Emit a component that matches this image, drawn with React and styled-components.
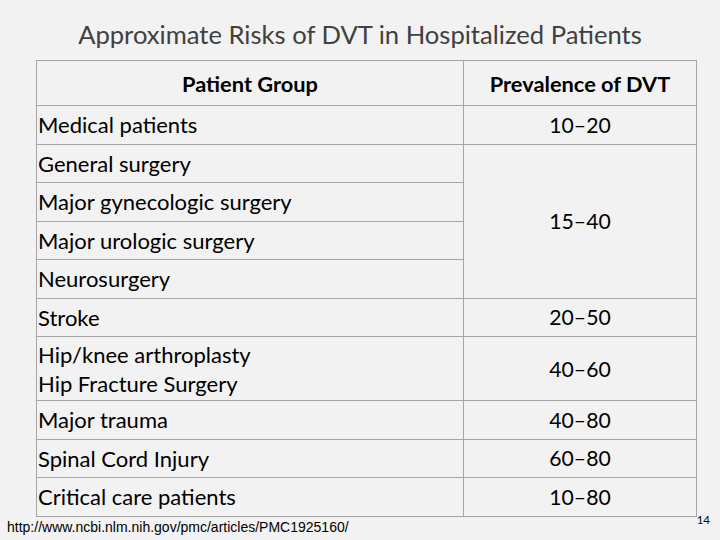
import React from 'react';
import styled, { createGlobalStyle } from 'styled-components';

const GlobalStyle = createGlobalStyle`
    html, body {
        margin: 0;
        padding: 0;
        background: #f2f2f2;
    }
`;

const Slide = styled.div`
    width: 720px;
    height: 540px;
    background: #f2f2f2;
    display: flex;
    flex-direction: column;
    overflow: hidden;
    font-family: "Lato", "Open Sans", sans-serif;
    color: #000;
`;

const Title = styled.h1`
    margin: 0 0 13px;
    padding-top: 21px;
    font-size: 25.6px;
    line-height: 26px;
    font-weight: 400;
    color: #404040;
    text-align: center;
`;

const Table = styled.div`
    margin-left: 36px;
    width: 661px;
    box-sizing: border-box;
    border: 1px solid #a6a6a6;
    border-bottom: none;
    display: grid;
    grid-template-columns: 426px 233px;
    grid-template-rows: 45px repeat(6, 38.5px) 64px repeat(3, 38.5px);
`;

const Cell = styled.div`
    box-sizing: border-box;
    border-bottom: 1px solid #a6a6a6;
    display: flex;
    align-items: center;
    padding-left: ${(props) => (props.$head ? '0' : '1px')};
    justify-content: ${(props) => (props.$head ? 'center' : 'flex-start')};
    font-size: ${(props) => (props.$head ? '21.8px' : '22px')};
    font-weight: ${(props) => (props.$head ? 700 : 400)};
    line-height: 29px;
`;

const ValueCell = styled.div`
    box-sizing: border-box;
    border-bottom: 1px solid #a6a6a6;
    border-left: 1px solid #a6a6a6;
    display: flex;
    align-items: center;
    justify-content: center;
    font-size: ${(props) => (props.$head ? '21.8px' : '21.2px')};
    font-weight: ${(props) => (props.$head ? 700 : 400)};
    grid-row: ${(props) => (props.$span ? `span ${props.$span}` : 'auto')};
`;

const Footer = styled.div`
    display: flex;
    justify-content: space-between;
    align-items: flex-start;
    padding: 0 10px 0 7px;
`;

const Source = styled.div`
    margin-top: 2px;
    font-family: "Liberation Sans", Arial, sans-serif;
    font-size: 14px;
    line-height: 16px;
    color: #000;
`;

const PageNumber = styled.div`
    margin-top: -3px;
    font-size: 11.5px;
    line-height: 11px;
    color: #000;
`;

const rows = [
    { group: ['Medical patients'], value: '10–20' },
    { group: ['General surgery'], value: '15–40', span: 4 },
    { group: ['Major gynecologic surgery'] },
    { group: ['Major urologic surgery'] },
    { group: ['Neurosurgery'] },
    { group: ['Stroke'], value: '20–50' },
    { group: ['Hip/knee arthroplasty', 'Hip Fracture Surgery'], value: '40–60' },
    { group: ['Major trauma'], value: '40–80' },
    { group: ['Spinal Cord Injury'], value: '60–80' },
    { group: ['Critical care patients'], value: '10–80' },
];

const App = () => {
    return (
        <>
            <GlobalStyle />
            <Slide>
                <Title>Approximate Risks of DVT in Hospitalized Patients</Title>
                <Table>
                    <Cell $head>Patient Group</Cell>
                    <ValueCell $head>Prevalence of DVT</ValueCell>
                    {rows.map((row) => (
                        <React.Fragment key={row.group[0]}>
                            <Cell>
                                <div>
                                    {row.group.map((line) => (
                                        <div key={line}>{line}</div>
                                    ))}
                                </div>
                            </Cell>
                            {row.value && <ValueCell $span={row.span}>{row.value}</ValueCell>}
                        </React.Fragment>
                    ))}
                </Table>
                <Footer>
                    <Source>http://www.ncbi.nlm.nih.gov/pmc/articles/PMC1925160/</Source>
                    <PageNumber>14</PageNumber>
                </Footer>
            </Slide>
        </>
    );
};

export default App;
